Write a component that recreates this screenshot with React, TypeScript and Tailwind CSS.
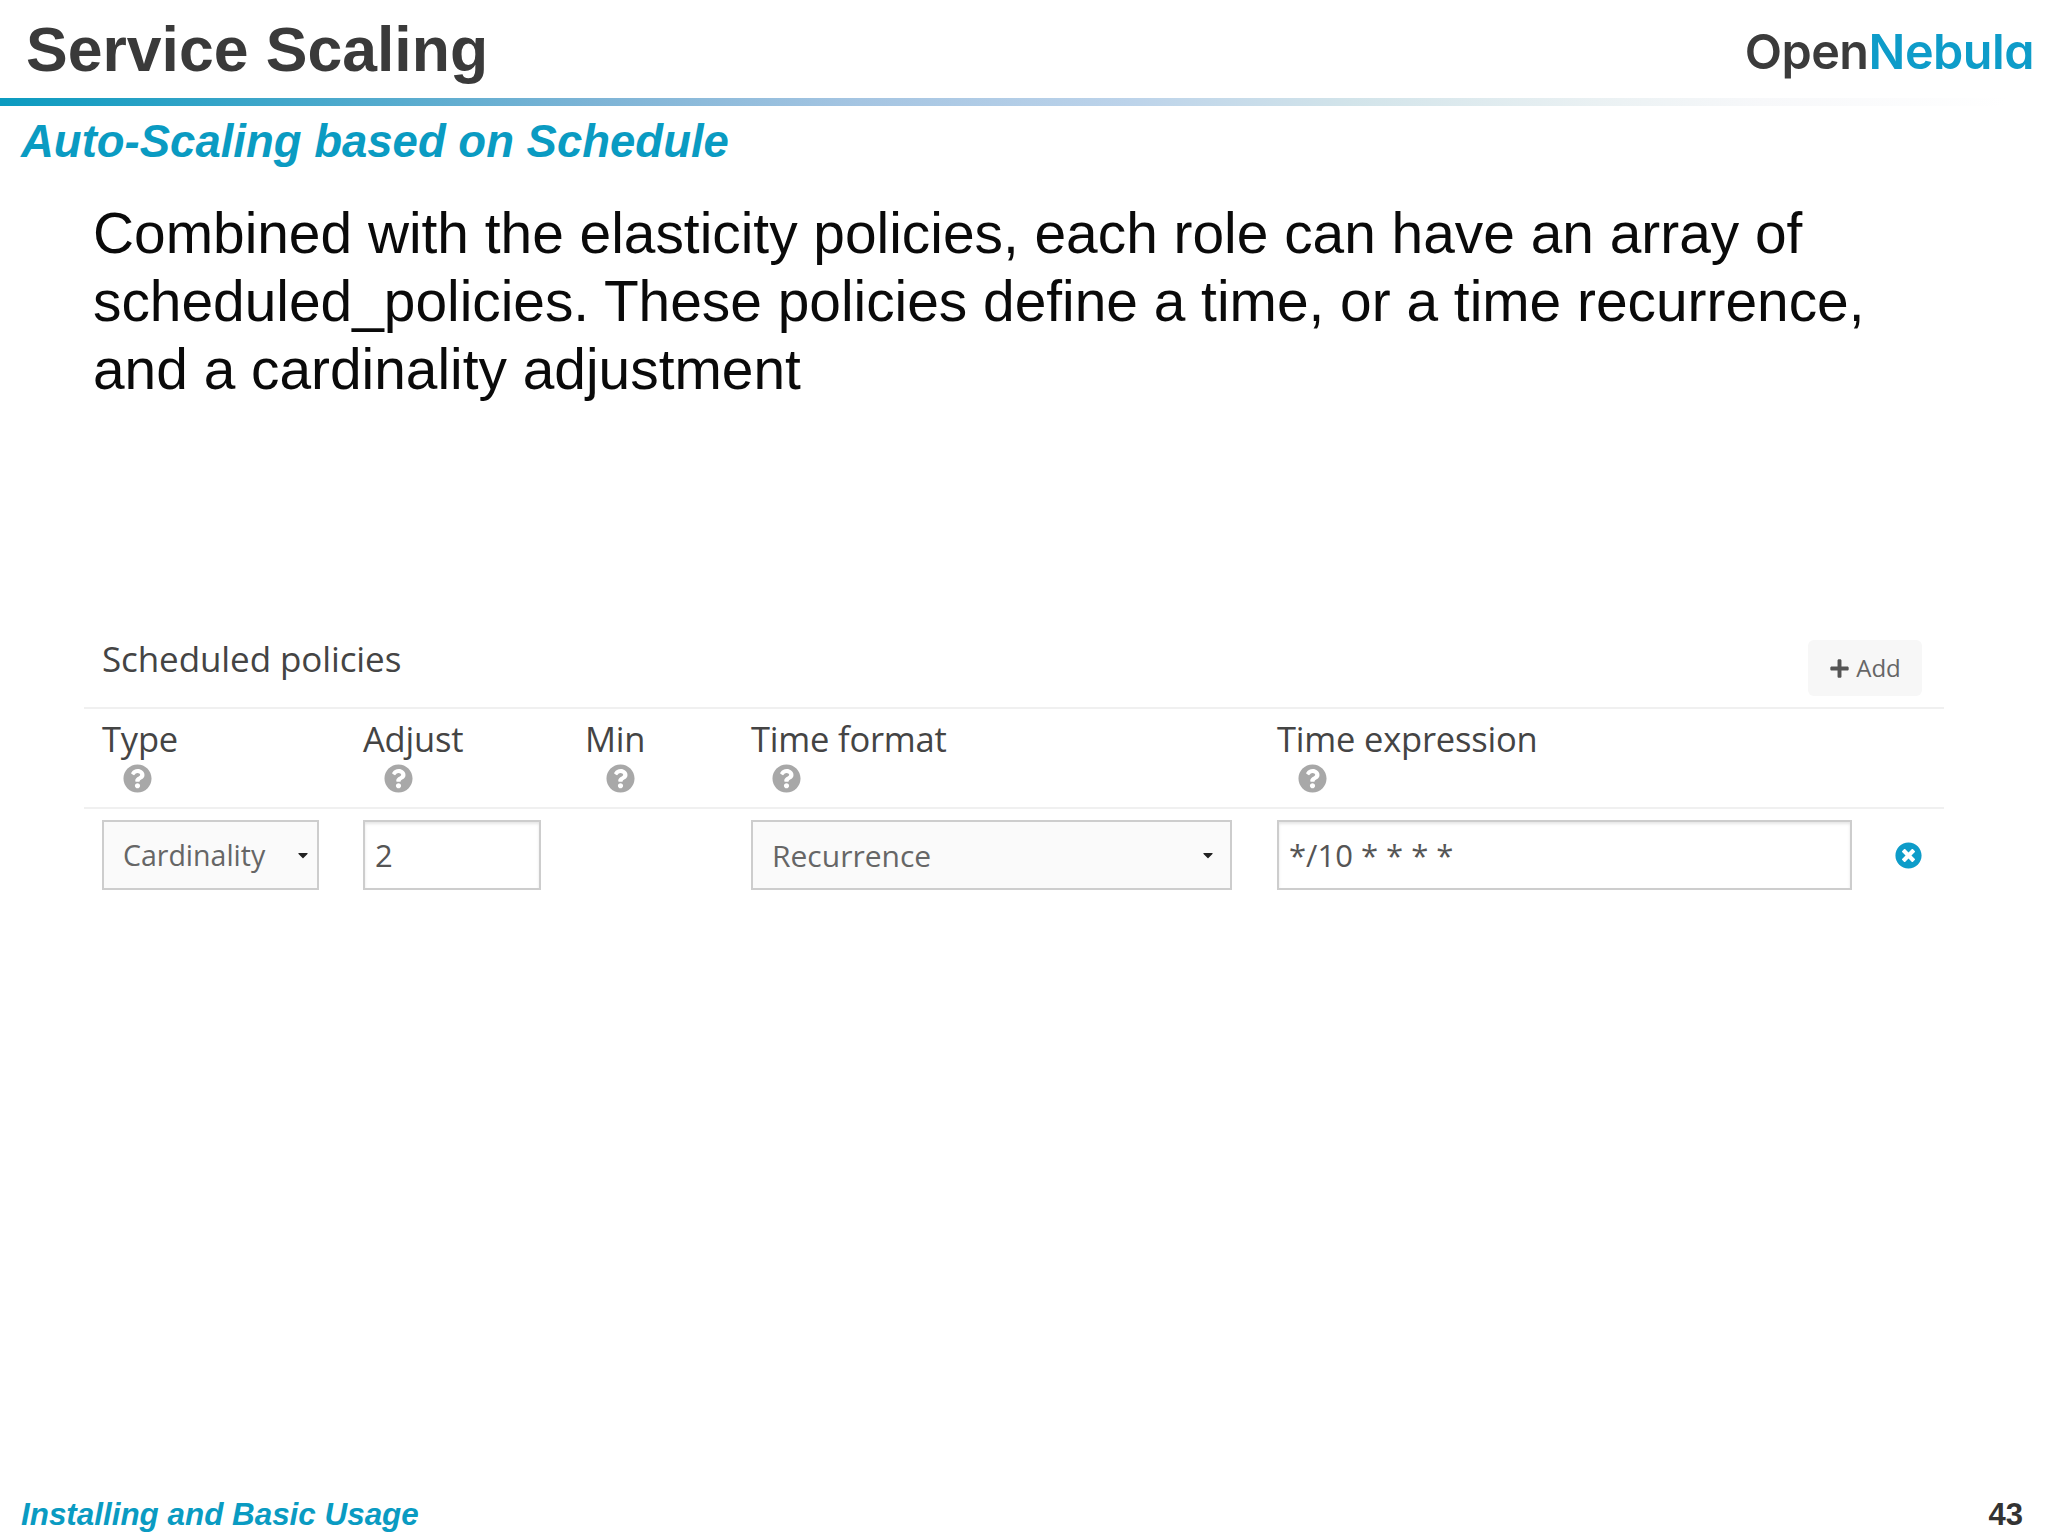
import React from "react";
import { FaQuestionCircle, FaTimesCircle, FaPlus, FaCaretDown } from "react-icons/fa";

const sans = "font-['Liberation_Sans',Arial,sans-serif]";
const ui = "font-['Open_Sans',sans-serif]";

function Head({ label, iconOffset }: { label: string; iconOffset: string }) {
  return (
    <div className="flex flex-col">
      <span className="text-[34.5px] leading-[46px] tracking-[-0.2px] text-[#444]">{label}</span>
      <span className={`flex h-[32px] items-center text-[#a8a8a8] ${iconOffset}`}>
        <FaQuestionCircle className="h-[29px] w-[29px]" />
      </span>
    </div>
  );
}

function Select({ value, width, pad, size }: { value: string; width: string; pad: string; size: string }) {
  return (
    <div className={`flex h-[70px] items-center justify-between border-2 border-[#cdcdcd] bg-[#fafafa] pl-[19px] ${width} ${pad}`}>
      <span className={`text-[#666] ${size}`}>{value}</span>
      <FaCaretDown className="h-[16px] w-[16px] text-[#222]" />
    </div>
  );
}

export default function App() {
  return (
    <div className={`flex h-[1536px] w-[2048px] flex-col overflow-hidden bg-white ${sans}`}>
      <header className="flex h-[98px] items-start justify-between">
        <h1 className="ml-[26px] mt-[14px] text-[62.5px] font-bold leading-[70px] text-[#3a3a3a]">Service Scaling</h1>
        <div className="mr-[14px] mt-[22px] font-['Inter',sans-serif] text-[48.5px] font-semibold leading-[60px] tracking-[-0.5px] [font-feature-settings:'cv11']">
          <span className="text-[#3b3b3b]">Open</span>
          <span className="text-[#0e9cc9]">Nebula</span>
        </div>
      </header>
      <div className="h-[8px] bg-[linear-gradient(90deg,#0b9bc0_0%,#7db4d6_29%,#a5c5e2_42%,#bcd3ea_55%,#d2e4ea_66%,#eaf1f3_78%,#f7f8fa_86%,#ffffff_98%)]" />
      <h2 className="ml-[21px] mt-[10px] text-[45.5px] font-bold italic leading-[52px] text-[#0a9bc2]">Auto-Scaling based on Schedule</h2>
      <p className="ml-[93px] mt-[32px] w-[1900px] text-[56.85px] leading-[68px] text-[#0a0a0a]">
        Combined with the elasticity policies, each role can have an array of
        <br />
        scheduled_policies. These policies define a time, or a time recurrence,
        <br />
        and a cardinality adjustment
      </p>

      <section className={`ml-[84px] mt-[216px] w-[1860px] ${ui}`}>
        <div className="flex h-[87px] items-start justify-between pl-[18px] pr-[22px]">
          <span className="mt-[14px] text-[35px] leading-[50px] tracking-[-0.1px] text-[#444]">Scheduled policies</span>
          <button className="mt-[20px] flex h-[56px] w-[114px] items-center justify-center gap-[6px] rounded-[6px] bg-[#f7f7f7] text-[24px] text-[#666]">
            <FaPlus className="h-[21px] w-[21px] text-[#555]" />
            Add
          </button>
        </div>
        <div className="grid h-[102px] grid-cols-[261px_222px_166px_526px_1fr] border-y-2 border-[#f0f0f0] pl-[18px] pt-[7px]">
          <Head label="Type" iconOffset="pl-[21px]" />
          <Head label="Adjust" iconOffset="pl-[21px]" />
          <Head label="Min" iconOffset="pl-[21px]" />
          <Head label="Time format" iconOffset="pl-[21px]" />
          <Head label="Time expression" iconOffset="pl-[21px]" />
        </div>
        <div className="grid grid-cols-[261px_222px_166px_526px_1fr] pl-[18px] pt-[11px]">
          <Select value="Cardinality" width="w-[217px]" pad="pr-[6px]" size="text-[28.5px]" />
          <div className="flex h-[70px] w-[178px] items-center border-2 border-[#cdcdcd] bg-white pl-[10px] shadow-[inset_0_2px_3px_rgba(0,0,0,0.1)]">
            <span className="text-[31px] text-[#555]">2</span>
          </div>
          <div />
          <Select value="Recurrence" width="w-[481px]" pad="pr-[14px]" size="text-[30px]" />
          <div className="flex items-center">
            <div className="flex h-[70px] w-[575px] items-center border-2 border-[#cdcdcd] bg-white pl-[10px] shadow-[inset_0_2px_3px_rgba(0,0,0,0.1)]">
              <span className="text-[31px] text-[#555]">*/10 * * * *</span>
            </div>
            <FaTimesCircle className="ml-[43px] h-[27px] w-[27px] text-[#0e9cc9]" />
          </div>
        </div>
      </section>

      <footer className="mt-auto flex h-[43px] items-start justify-between pl-[21px] pr-[25px]">
        <span className="text-[31.4px] font-bold italic leading-[44px] text-[#0a9bc2]">Installing and Basic Usage</span>
        <span className="text-[31px] font-bold leading-[44px] text-[#333]">43</span>
      </footer>
    </div>
  );
}
